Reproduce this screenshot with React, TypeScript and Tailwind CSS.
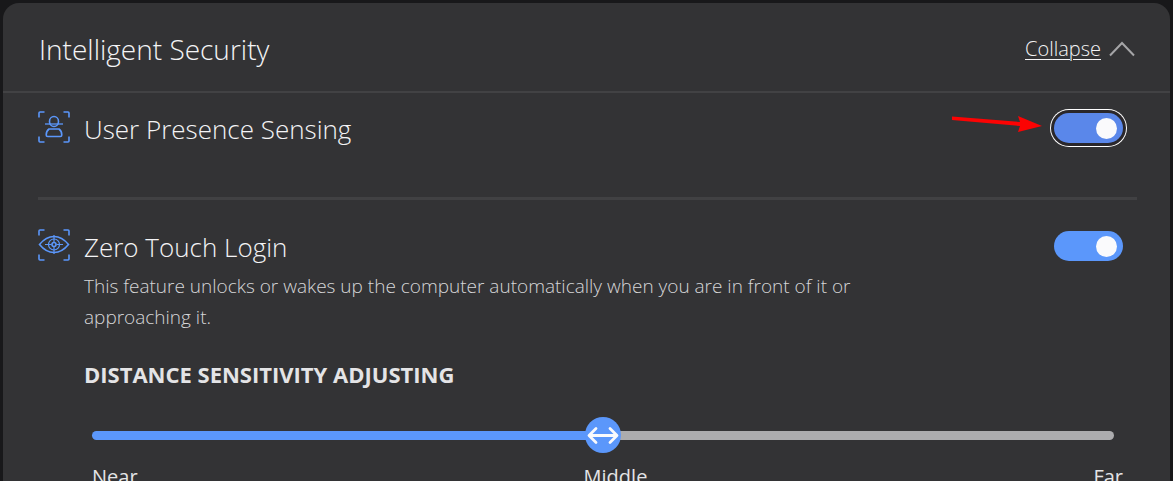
import { useState } from "react";

const brackets = "M1 6.500V2q0-1 1-1h4.500M25.500 1H30q1 0 1 1v4.500M31 25.500V30q0 1-1 1h-4.500M6.500 31H2q-1 0-1-1v-4.500";

function PresenceIcon() {
  return (
    <svg viewBox="0 0 32 32" className="size-8 shrink-0" fill="none" stroke="#5b97fb" strokeWidth="1.600" aria-hidden="true">
      <path d={brackets} />
      <ellipse cx="16" cy="10.500" rx="4.500" ry="5" />
      <path d="M7 13h18" strokeWidth="2" opacity="0.65" />
      <path d="M11 18h10c2 1.500 2.800 3.500 2.800 6 0 1-.5 1.500-1.500 1.500H9.700c-1 0-1.500-.5-1.500-1.500 0-2.500.8-4.500 2.800-6z" />
    </svg>
  );
}

function EyeScanIcon() {
  return (
    <svg viewBox="0 0 32 32" className="size-8 shrink-0" fill="none" stroke="#5b97fb" strokeWidth="1.600" aria-hidden="true">
      <path d={brackets} />
      <path d="M1.500 15.500C6 10 10.500 7.500 16 7.500s10 2.500 14.500 8C26 21 21.500 23.500 16 23.500S6 21 1.500 15.500z" />
      <circle cx="16" cy="15.500" r="5.500" strokeWidth="1.200" />
      <circle cx="16" cy="15.500" r="2" />
      <path d="M16 6v7M16 18v7M7 15.500h6.500M18.500 15.500H25" strokeWidth="1.200" />
    </svg>
  );
}

function Toggle({ id, focused = false }: { id: string; focused?: boolean }) {
  const [on, setOn] = useState(true);
  return (
    <input
      id={id}
      type="checkbox"
      role="switch"
      checked={on}
      onChange={() => setOn(!on)}
      className={`flex h-[30px] w-[69px] shrink-0 cursor-pointer appearance-none items-center rounded-full px-1.5 outline-none before:size-[21px] before:rounded-full before:bg-[#fafafc] checked:justify-end ${
        focused
          ? "bg-[#777779] shadow-[0_0_0_3px_#2a272b,0_0_0_4px_#fff] checked:bg-[#5a87ea]"
          : "bg-[#777779] checked:bg-[#5b97fb]"
      }`}
    />
  );
}

function DistanceSlider() {
  const [value, setValue] = useState(50);
  return (
    <div className="pl-2">
      <div className="relative mr-[23px] flex h-9 items-center">
        <input
          type="range"
          aria-labelledby="distance"
          value={value}
          onChange={(e) => setValue(Number(e.target.value))}
          style={{ backgroundImage: `linear-gradient(to right, #5b97fb ${value}%, #acacae ${value}%)` }}
          className="h-[9px] w-full cursor-pointer appearance-none rounded-full outline-none [&::-webkit-slider-thumb]:size-9 [&::-webkit-slider-thumb]:appearance-none [&::-webkit-slider-thumb]:rounded-full [&::-webkit-slider-thumb]:bg-[#5b97fb]"
        />
        <div className="pointer-events-none absolute inset-x-[18px] inset-y-0">
          <svg
            viewBox="0 0 36 36"
            className="absolute top-0 size-9 -translate-x-1/2"
            style={{ left: `${value}%` }}
            fill="none"
            stroke="#fafafc"
            strokeWidth="2.800"
            strokeLinecap="round"
            strokeLinejoin="round"
            aria-hidden="true"
          >
            <path d="M4.500 18.500h27M11 11.500l-7 7 7 7M25 11.500l7 7-7 7" />
          </svg>
        </div>
      </div>
      <div className="mr-3.5 mt-2.5 flex justify-between text-xl text-[#e4e4e6]">
        <span>Near</span>
        <span>Middle</span>
        <span>Far</span>
      </div>
    </div>
  );
}

export default function App() {
  const [open, setOpen] = useState(true);

  return (
    <div className="h-screen overflow-hidden bg-[#18181a] px-[3px] pt-[3px] font-['Open_Sans','Noto_Sans',sans-serif] text-[#f4f4f6]">
      <section className="min-h-screen rounded-t-2xl bg-[#333335]">
        <header className="flex h-[90px] items-center justify-between border-b-2 border-[#424244] pl-9 pr-[35px] pt-1">
          <h1 className="text-[28px] font-light">Intelligent Security</h1>
          <button type="button" onClick={() => setOpen(!open)} className="flex cursor-pointer items-center gap-2 text-xl font-light">
            <span className="underline decoration-1 underline-offset-3">Collapse</span>
            <svg viewBox="0 0 26 16" className="h-4 w-[26px]" fill="none" stroke="#a5a5a7" strokeWidth="2" aria-hidden="true">
              <path d="M1 14.500 13 2l12 12.500" />
            </svg>
          </button>
        </header>

        {open && (
          <div className="pl-[35px] pr-[33px]">
            <div className="flex h-[107px] items-start justify-between border-b-3 border-[#414143] pr-3.5 pt-[18px]">
              <div className="flex gap-3.5">
                <PresenceIcon />
                <label htmlFor="presence" className="text-[26px] font-light leading-9">User Presence Sensing</label>
              </div>
              <div className="relative pt-0.5">
                <Toggle id="presence" focused />
                <svg viewBox="0 0 92 20" className="absolute right-[80px] top-1 h-5 w-[92px]" fill="#fc0303" aria-hidden="true">
                  <path d="M1 1.500 69 7 67 1 91 11 67 17 69 11 1 5z" />
                </svg>
              </div>
            </div>

            <div className="flex gap-3.5 pt-[29px]">
              <EyeScanIcon />
              <div className="min-w-0 flex-1">
                <div className="flex items-start justify-between pr-3.5">
                  <label htmlFor="zero-touch" className="text-[26px] font-light leading-9">Zero Touch Login</label>
                  <div className="pt-0.5">
                    <Toggle id="zero-touch" />
                  </div>
                </div>
                <p className="mt-1.5 max-w-[800px] text-[19px] font-light leading-[31px] text-[#d6d6d8]">
                  This feature unlocks or wakes up the computer automatically when you are in front of it or approaching it.
                </p>
                <h2 id="distance" className="mb-7 mt-[26px] text-[22px] font-bold leading-[30px] text-[#e4e4e6]">DISTANCE SENSITIVITY ADJUSTING</h2>
                <DistanceSlider />
              </div>
            </div>
          </div>
        )}
      </section>
    </div>
  );
}
